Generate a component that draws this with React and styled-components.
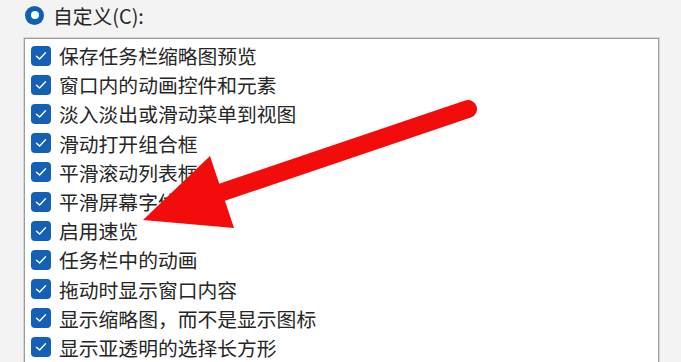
import React from "react";
import styled, { createGlobalStyle } from "styled-components";

const Global = createGlobalStyle`
  html, body { margin: 0; padding: 0; }
  body {
    background: #f3f3f3;
    overflow: hidden;
    font-family: "Noto Sans CJK SC", "Noto Sans", sans-serif;
  }
`;

const Page = styled.div`
  position: relative;
  width: 681px;
  height: 362px;
  overflow: hidden;
  padding: 5px 0 0 24px;
  box-sizing: border-box;
  display: flex;
  flex-direction: column;
`;

const RadioRow = styled.div`
  display: flex;
  align-items: center;
  gap: 9px;
  height: 20px;
  padding-left: 1px;
  color: #262626;
  font-size: 19.8px;
`;

const Radio = styled.span`
  width: 19px;
  height: 19px;
  border-radius: 50%;
  background: #0f5fb5;
  display: flex;
  align-items: center;
  justify-content: center;
  &::after {
    content: "";
    width: 8px;
    height: 8px;
    border-radius: 50%;
    background: #fff;
  }
`;

const ListBox = styled.div`
  margin-top: 13px;
  width: 635px;
  height: 360px;
  background: #ffffff;
  border: 1px solid #9c9c9c;
  box-shadow: 0 0 0 1px #d6d6d6;
  padding: 2px 0 0 6px;
  box-sizing: border-box;
  display: flex;
  flex-direction: column;
`;

const Row = styled.div`
  display: flex;
  align-items: center;
  gap: 8px;
  height: 29.2px;
  font-size: 19.8px;
  color: #262626;
  white-space: nowrap;
`;

const Box = styled.span`
  flex: none;
  width: 20px;
  height: 20px;
  border-radius: 4px;
  background: #1460b6;
  display: flex;
  align-items: center;
  justify-content: center;
`;

const Overlay = styled.svg`
  position: absolute;
  left: 0;
  top: 0;
  pointer-events: none;
`;

const items = [
  "保存任务栏缩略图预览",
  "窗口内的动画控件和元素",
  "淡入淡出或滑动菜单到视图",
  "滑动打开组合框",
  "平滑滚动列表框",
  "平滑屏幕字体边缘",
  "启用速览",
  "任务栏中的动画",
  "拖动时显示窗口内容",
  "显示缩略图，而不是显示图标",
  "显示亚透明的选择长方形",
];

const Check = () => (
  <svg width="12" height="10" viewBox="0 0 12 10">
    <path d="M1.5 5.2 L4.6 8 L10.5 1.8" fill="none" stroke="#fff" strokeWidth="1.4" strokeLinecap="round" strokeLinejoin="round" />
  </svg>
);

export default function App() {
  return (
    <>
      <Global />
      <Page>
        <RadioRow>
          <Radio />
          <span>自定义(C):</span>
        </RadioRow>
        <ListBox>
          {items.map((t) => (
            <Row key={t}>
              <Box><Check /></Box>
              <span>{t}</span>
            </Row>
          ))}
        </ListBox>
        <Overlay width="681" height="362" viewBox="0 0 681 362">
          <line x1="468" y1="109" x2="205" y2="198" stroke="#f20c0c" strokeWidth="18" strokeLinecap="round" />
          <polygon points="143,220 210,156 234,228" fill="#f20c0c" />
        </Overlay>
      </Page>
    </>
  );
}
